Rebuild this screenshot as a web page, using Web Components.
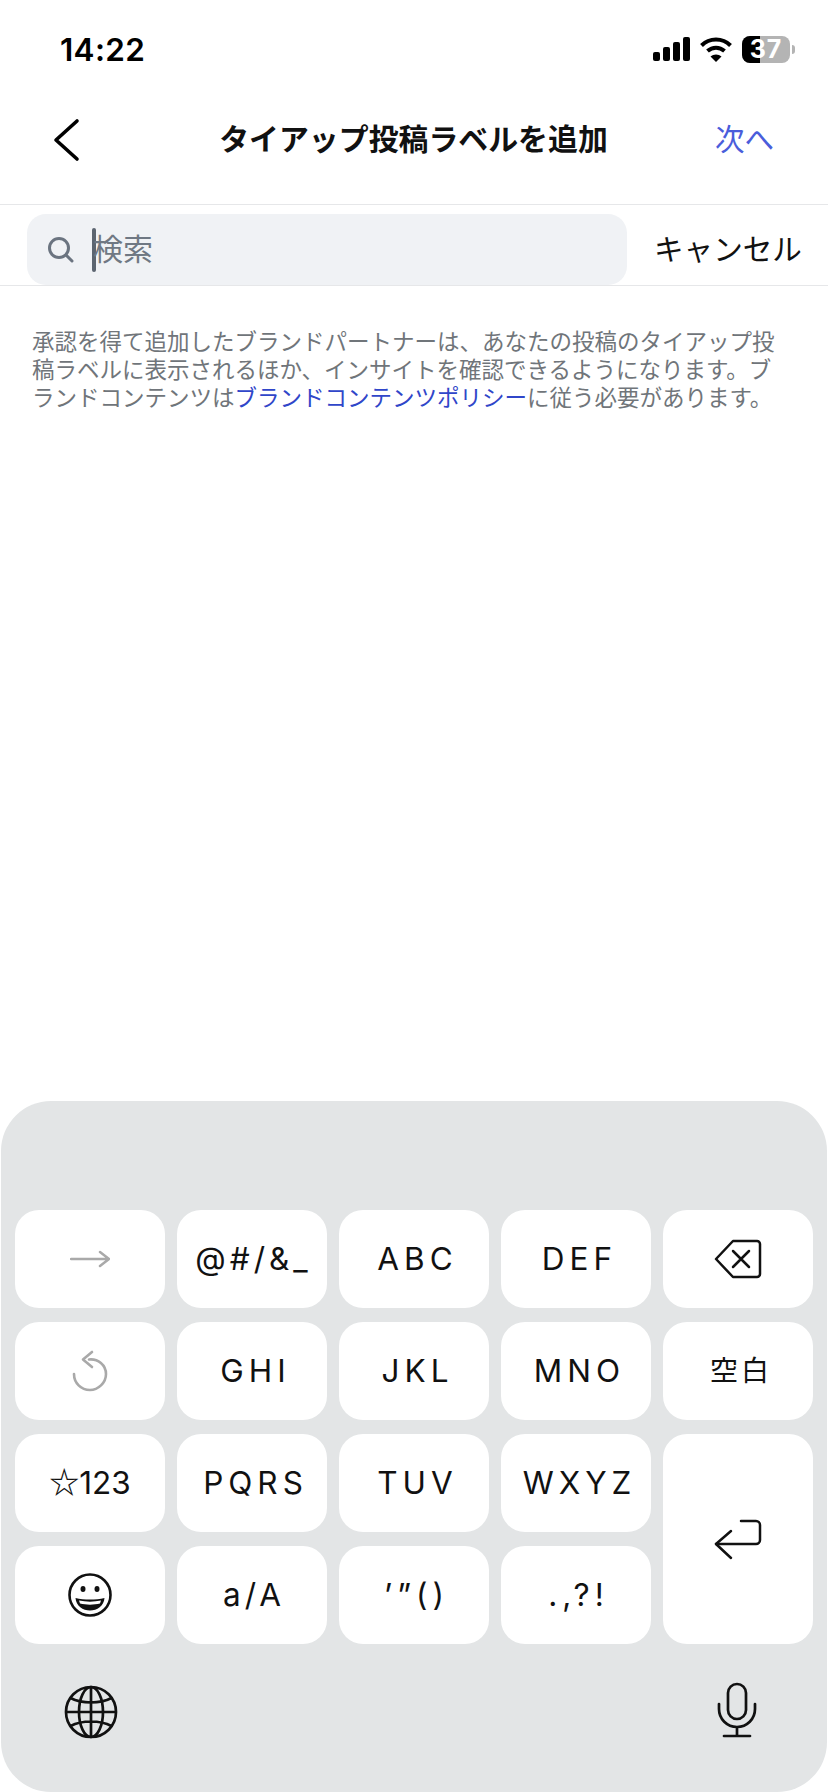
<!DOCTYPE html>
<html lang="ja">
<head>
<meta charset="utf-8">
<title>タイアップ投稿ラベルを追加</title>
<style>
  html,body{margin:0;padding:0;background:#fff}
  body{font-family:"Noto Sans CJK JP","Noto Sans",sans-serif}
  app-screen{width:828px;height:1792px}
</style>
</head>
<body>
<app-screen>
  <status-bar time="14:22" level="37"></status-bar>
  <nav-header title="タイアップ投稿ラベルを追加" action="次へ"></nav-header>
  <search-row placeholder="検索" cancel="キャンセル"></search-row>
  <notice-text>承認を得て追加したブランドパートナーは、あなたの投稿のタイアップ投稿ラベルに表示されるほか、インサイトを確認できるようになります。ブランドコンテンツは<a>ブランドコンテンツポリシー</a>に従う必要があります。</notice-text>
  <ime-keyboard slot="bottom"></ime-keyboard>
</app-screen>
<script>
const CJK = '"Noto Sans CJK JP","Noto Sans",sans-serif';
const LATIN = 'Inter,"Noto Sans CJK JP",sans-serif';

class AppScreen extends HTMLElement {
  constructor() { super(); this.attachShadow({ mode: "open" }); }
  connectedCallback() {
    this.shadowRoot.innerHTML = `
      <style>
        :host{display:flex;flex-direction:column;background:#fff;overflow:hidden}
        .main{flex:1;min-height:0}
      </style>
      <div class="main"><slot></slot></div>
      <slot name="bottom"></slot>`;
  }
}

class StatusBar extends HTMLElement {
  constructor() { super(); this.attachShadow({ mode: "open" }); }
  connectedCallback() {
    const level = this.getAttribute("level");
    this.shadowRoot.innerHTML = `
      <style>
        :host{display:flex;align-items:center;justify-content:space-between;height:90px;padding:8px 33px 0 60px;box-sizing:border-box;color:#000}
        .time{font:600 31.5px/1 ${LATIN};letter-spacing:.3px;margin-top:2px}
        .icons{display:flex;align-items:center;gap:10px}
        .batt{position:relative;width:48px;height:27px;border-radius:8px;background:#b4b4b4;font:700 25px/27px ${LATIN};color:#fff;text-align:center;letter-spacing:1px}
        .batt i{position:absolute;left:0;top:0;bottom:0;width:18px;background:#000;border-radius:8px 0 0 8px}
        .batt span{position:relative}
        .wrap{display:flex;align-items:center;gap:2px}
        .nub{width:3px;height:9px;background:#b4b4b4;border-radius:0 3px 3px 0}
      </style>
      <div class="time">${this.getAttribute("time")}</div>
      <div class="icons">
        <svg width="37" height="24" viewBox="0 0 37 24"><rect x="0" y="15" width="7" height="9" rx="2"/><rect x="10" y="10" width="7" height="14" rx="2"/><rect x="20" y="5" width="7" height="19" rx="2"/><rect x="30" y="0" width="7" height="24" rx="2"/></svg>
        <svg width="32" height="25" viewBox="0 0 32 25" fill="none" stroke="#000" stroke-width="4"><path d="M1.5 8.5C9.5 .5 22.500 .5 30.500 8.500"/><path d="M7.500 14C12.500 9.500 19.500 9.500 24.500 14"/><path d="M16 25L10.500 19.500C13.500 16.800 18.500 16.800 21.500 19.500Z" fill="#000" stroke="none"/></svg>
        <div class="wrap"><div class="batt"><i></i><span>${level}</span></div><div class="nub"></div></div>
      </div>`;
  }
}

class NavHeader extends HTMLElement {
  constructor() { super(); this.attachShadow({ mode: "open" }); }
  connectedCallback() {
    this.shadowRoot.innerHTML = `
      <style>
        :host{display:flex;align-items:center;box-sizing:border-box;padding:0 54px 18px 53px;border-bottom:1px solid #e6e7e9;height:115px}
        svg{display:block;flex:none;margin-top:4px}
        h1{flex:1;margin:0;text-align:center;font:700 29.9px/1.2 ${CJK};color:#111;padding-left:29px}
        .act{font:400 29.5px/1.2 ${CJK};color:#4a5ddb}
      </style>
      <svg width="30" height="44" viewBox="0 0 30 44" fill="none" stroke="#000" stroke-width="3.6" stroke-linecap="round" stroke-linejoin="round"><path d="M24 3L3 22L24 41"/></svg>
      <h1>${this.getAttribute("title")}</h1>
      <div class="act">${this.getAttribute("action")}</div>`;
  }
}

class SearchRow extends HTMLElement {
  constructor() { super(); this.attachShadow({ mode: "open" }); }
  connectedCallback() {
    this.shadowRoot.innerHTML = `
      <style>
        :host{display:flex;align-items:flex-end;height:81px;box-sizing:border-box;padding:0 0 0 27px;border-bottom:1px solid #e6e7e9;gap:27px}
        .box{width:600px;height:71px;background:#f0f2f5;border-radius:19px;display:flex;align-items:center;padding-left:20px;box-sizing:border-box;flex:none}
        svg{display:block;flex:none}
        .caret{width:4px;height:44px;background:#5c6570;border-radius:2px;margin:0 0 0 18px}
        .ph{font:400 30px/1 ${CJK};color:#6f7883;margin:0 0 5px -3px}
        .cancel{font:400 29.6px/71px ${CJK};color:#111;white-space:nowrap;flex:none;padding-bottom:2px}
      </style>
      <div class="box">
        <svg width="27" height="27" viewBox="0 0 27 27" fill="none" stroke="#6b7480" stroke-width="3" stroke-linecap="round"><circle cx="12" cy="12" r="9.500"/><path d="M19 19L25 25"/></svg>
        <span class="caret"></span>
        <span class="ph">${this.getAttribute("placeholder")}</span>
      </div>
      <div class="cancel">${this.getAttribute("cancel")}</div>`;
  }
}

class NoticeText extends HTMLElement {
  constructor() { super(); this.attachShadow({ mode: "open" }); }
  connectedCallback() {
    this.shadowRoot.innerHTML = `
      <style>
        :host{display:block;padding:40px 50px 0 32px;font:400 22.5px/28px ${CJK};color:#70757a}
        ::slotted(a){color:#3046c9}
      </style>
      <slot></slot>`;
  }
}

class KbKey extends HTMLElement {
  constructor() { super(); this.attachShadow({ mode: "open" }); }
  connectedCallback() {
    this.shadowRoot.innerHTML = `
      <style>
        :host{display:flex;align-items:center;justify-content:center;box-sizing:border-box;background:#fff;border-radius:24px;color:#111;font:400 var(--fs,31.5px)/1 ${LATIN};letter-spacing:var(--sp,5px);padding-left:calc(var(--sp,5px) + var(--off,2px));padding-right:var(--rt,0px);white-space:pre}
        :host([tall]){grid-row:span 2}
        ::slotted(span){font:500 30px/1 ${CJK};letter-spacing:0;position:relative;top:-3px}
      </style>
      <slot></slot>`;
  }
}

const ICONS = {
  arrow: `<svg width="40" height="20" viewBox="0 0 40 20" fill="none" stroke="#a9a9a9" stroke-width="2.500" stroke-linecap="round" stroke-linejoin="round"><path d="M1 10H39M30 3L39 10L30 17"/></svg>`,
  undo: `<svg width="36" height="42" viewBox="0 0 36 42" fill="none" stroke="#a9a9a9" stroke-width="2.600" stroke-linecap="round" stroke-linejoin="round"><path d="M17 9.500C26 8.500 34 15 34 24C34 33 26 40 18 40C9 40 2 33 2 24"/><path d="M20 2L11 9.500L20 17"/></svg>`,
  del: `<svg width="48" height="40" viewBox="0 0 48 40" fill="none" stroke="#111" stroke-width="2.500" stroke-linejoin="round" stroke-linecap="round"><path d="M19 2H43A3 3 0 0 1 46 5V35A3 3 0 0 1 43 38H19L2 20Z"/><path d="M19 12L35 28M35 12L19 28"/></svg>`,
  ret: `<svg width="48" height="42" viewBox="0 0 48 42" fill="none" stroke="#111" stroke-width="2.500" stroke-linecap="round" stroke-linejoin="round"><path d="M17 13L2 26L17 40"/><path d="M2 26H42A4 4 0 0 0 46 22V7A4 4 0 0 0 42 3H27"/></svg>`,
  emoji: `<svg width="44" height="44" viewBox="0 0 44 44" fill="none" stroke="#111" stroke-width="2.600"><circle cx="22" cy="22" r="20.500"/><ellipse cx="15" cy="16" rx="2.500" ry="3" fill="#111" stroke="none"/><ellipse cx="29" cy="16" rx="2.500" ry="3" fill="#111" stroke="none"/><path d="M7.500 25C16 27 28 27 36.500 25C36 33 29 37.500 22 37.500C15 37.500 8 33 7.500 25Z" fill="#111" stroke="none"/><path d="M11 27.500C18 29 26 29 33 27.500L32 30.500C26 32 18 32 12 30.500Z" fill="#fff" stroke="none"/></svg>`,
  globe: `<svg width="54" height="54" viewBox="0 0 54 54" fill="none" stroke="#111" stroke-width="2.700"><circle cx="27" cy="27" r="25"/><ellipse cx="27" cy="27" rx="12" ry="25"/><path d="M27 2V52M2 27H52M6.500 13C18 19 36 19 47.500 13M6.500 41C18 35 36 35 47.500 41"/></svg>`,
  mic: `<svg class="mic" width="40" height="56" viewBox="0 0 40 56" fill="none" stroke="#111" stroke-width="2.700" stroke-linecap="round"><rect x="11" y="2" width="18" height="35" rx="9"/><path d="M2 22V27C2 37 10 45 20 45C30 45 38 37 38 27V22M20 45V54M7 54H33"/></svg>`
};

class ImeKeyboard extends HTMLElement {
  constructor() { super(); this.attachShadow({ mode: "open" }); }
  connectedCallback() {
    const keys = [
      ["arrow"], "@#/&_", "ABC", "DEF", ["del"],
      ["undo"], "GHI", "JKL", "MNO", "空白",
      "☆123", "PQRS", "TUV", "WXYZ", ["ret"],
      ["emoji"], "a/A", "’”()", ".,?!"
    ];
    const opts = {
      "@#/&_": "--sp:4px;--off:0px;--rt:1px", "☆123": "--sp:0px;--off:0px", "a/A": "--sp:4px;--off:0px",
      "空白": "--sp:3px;--fs:28px;--off:3px", ".,?!": "--sp:5px;--off:0px", "’”()": "--sp:5px;--off:0px"
    };
    const html = keys.map((k) => {
      if (Array.isArray(k)) return `<kb-key style="--sp:0px;--off:0px" ${k[0] === "ret" ? "tall" : ""}>${ICONS[k[0]]}</kb-key>`;
      const label = k === "☆123" ? "<span>☆</span>123" : k;
      return `<kb-key style="${opts[k] || ""}">${label}</kb-key>`;
    }).join("");
    this.shadowRoot.innerHTML = `
      <style>
        :host{display:block;height:691px;box-sizing:border-box;margin:0 1px;padding:109px 14px 0;background:#e3e5e6;border-radius:50px;flex:none}
        .grid{display:grid;grid-template-columns:repeat(5,150px);grid-auto-rows:98px;gap:14px 12px}
        .bar{display:flex;justify-content:space-between;align-items:flex-start;padding:41px 56px 0 49px}
        svg{display:block}
        .mic{margin-top:-3px}
      </style>
      <div class="grid">${html}</div>
      <div class="bar">${ICONS.globe}${ICONS.mic}</div>`;
  }
}

customElements.define("app-screen", AppScreen);
customElements.define("status-bar", StatusBar);
customElements.define("nav-header", NavHeader);
customElements.define("search-row", SearchRow);
customElements.define("notice-text", NoticeText);
customElements.define("kb-key", KbKey);
customElements.define("ime-keyboard", ImeKeyboard);
</script>
</body>
</html>
